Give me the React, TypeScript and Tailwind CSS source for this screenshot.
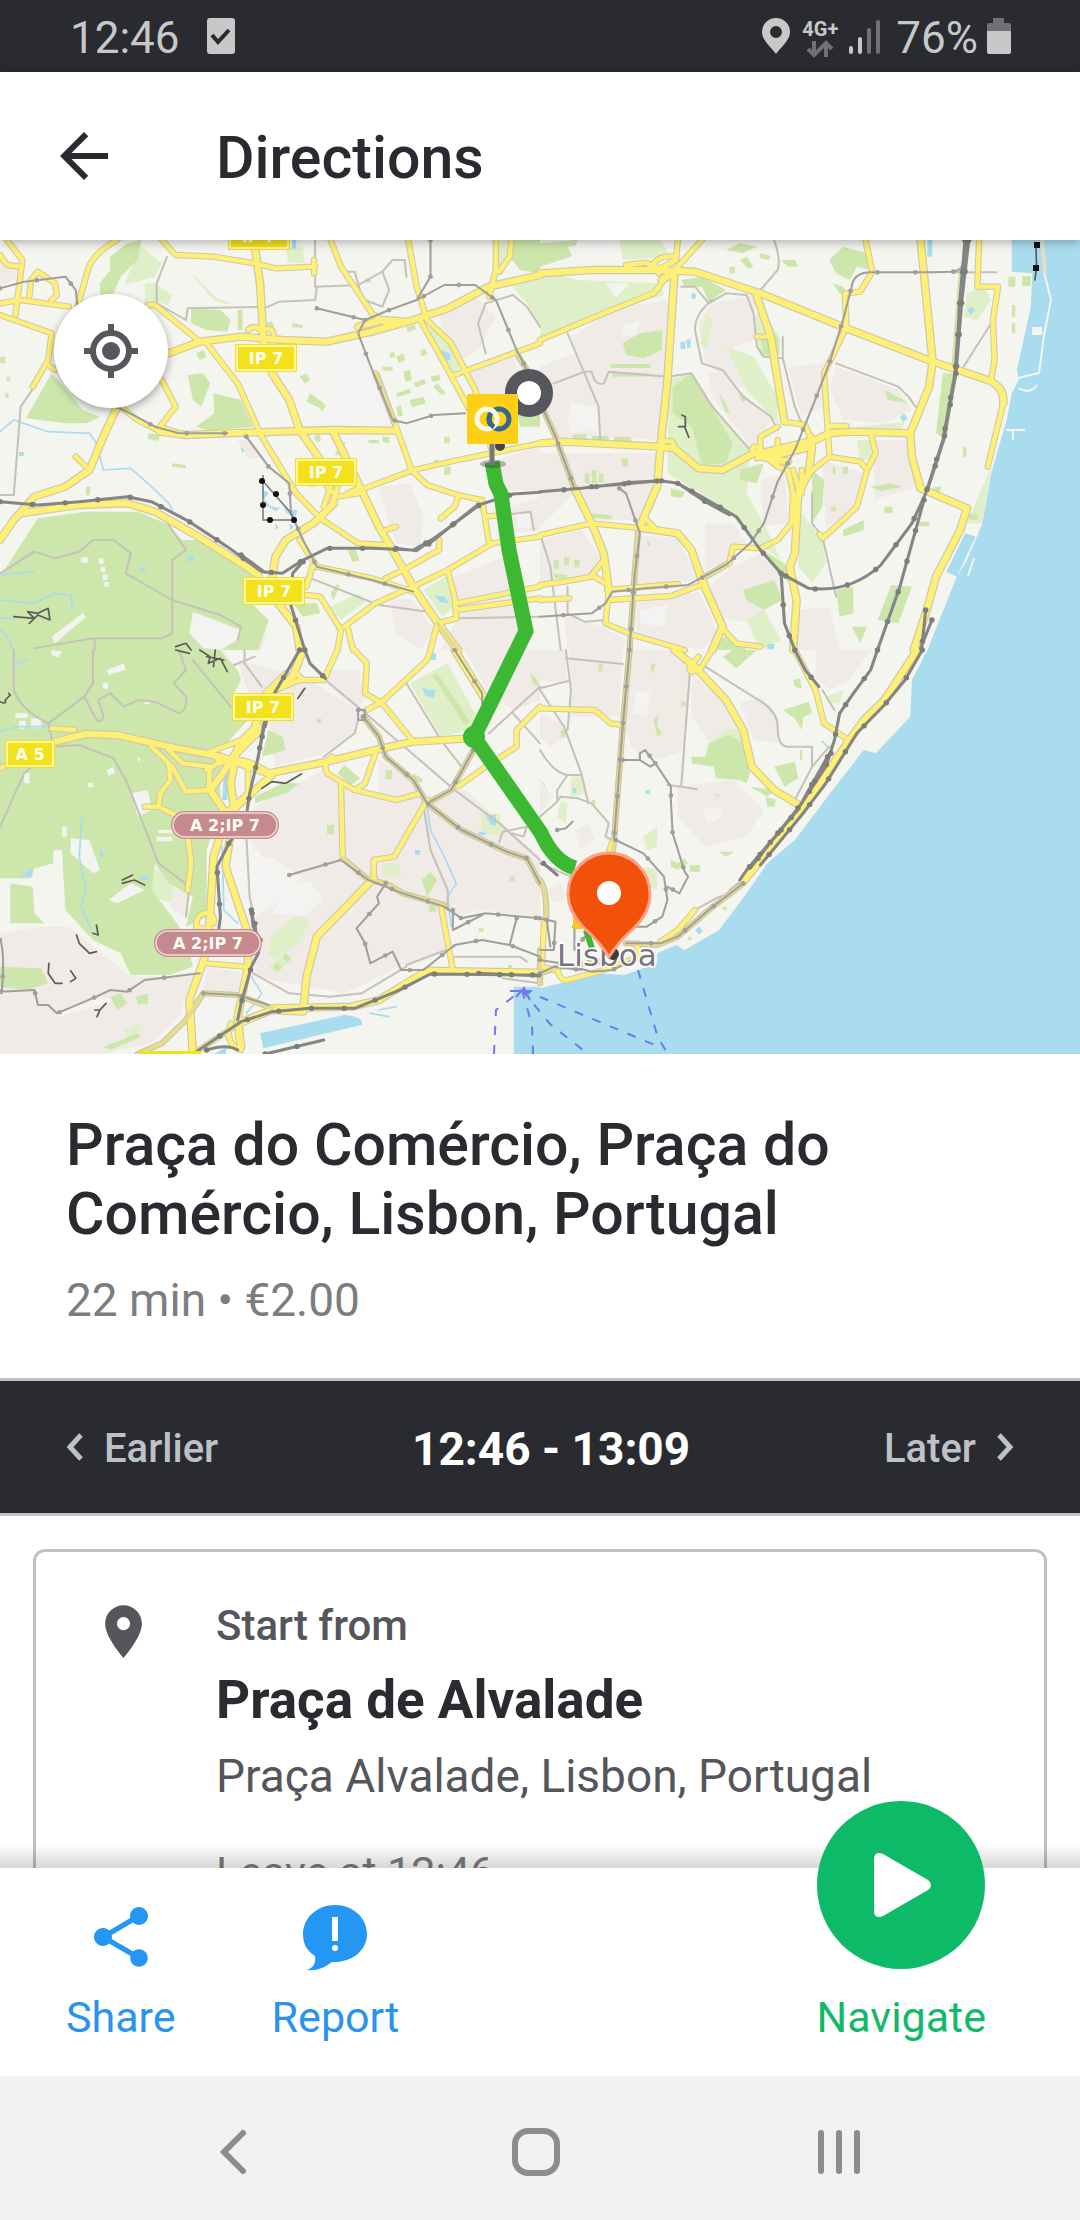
import React from "react";
import { MdArrowBack, MdLocationOn, MdShare } from "react-icons/md";

/* ---------- Map data: four sheets, each drawn in its own 1568 x 1230 grid ---------- */

type Sheet = {
  at: string;
  built: string[];
  pale: string[];
  wood: string[];
  bare: string[];
  water: string[];
  stream: string[];
  path: string[];
  road: string[];
  wide: string[];
  tramRoad: string[];
  tram: string[];
  rail: string[];
  scrub: string[];
};

const northWest: Sheet = {
  at: "translate(0 0) scale(.34439 .33333)",
  built: [
    "M1360 390L1490 350L1520 430L1500 600L1420 620L1400 480Z",
    "M1100 740L1190 730L1230 830L1220 920L1150 910L1130 850Z",
    "M1320 1010L1490 940L1510 1230L1280 1230L1330 1130Z",
    "M590 930L650 940L690 1000L600 1000L570 960Z",
    "M0 60L60 85L40 120L0 140Z",
    "M1270 210L1380 170L1440 230L1390 330L1340 360L1290 280Z",
    "M1440 660L1568 620L1568 750L1470 750Z",
    "M1130 1070L1200 1080L1260 1170L1220 1230L1150 1180Z",
    "M690 600L730 600L760 650L720 660Z",
    "M1480 800L1568 770L1568 870L1480 880Z",
    "M700 1160L780 1140L760 1230L690 1230Z",
  ],
  pale: [
    "M410 20L470 70L450 110L360 135L385 75Z",
    "M450 130L500 165L490 195L455 185Z",
    "M1245 245L1300 290L1335 385L1310 400L1250 290Z",
    "M1230 1050L1300 1005L1320 1100L1285 1130Z",
    "M560 105C600 130 610 180 665 185L665 192C600 192 595 130 560 112Z",
    "M1480 130L1568 115L1568 260L1530 190Z",
    "M830 20L880 20L885 70L835 65Z",
    "M420 130H455V190H420Z",
    "M1450 0H1485L1465 90L1445 80Z",
    "M960 1100L1040 1060L1060 1085L990 1140Z",
  ],
  wood: [
    "M0 1010L110 835L250 815L400 815L480 850L500 870L530 900L600 900L700 985L760 1010L720 1060L740 1100L780 1140L750 1230L0 1230Z",
    "M150 400L210 470L240 510L290 530L250 550L190 550L75 535Z",
    "M370 10L410 0L400 60L350 110L330 160L290 170L290 130L320 90L320 50Z",
    "M555 205L640 210L670 240L660 275L600 270L555 250Z",
    "M620 460L700 480L735 560L610 572L570 560L622 520Z",
    "M545 405L590 400L610 430L585 500L560 480Z",
    "M1490 0H1568V100L1510 90L1480 50Z",
    "M850 1090L920 1090L930 1120L880 1130Z",
    "M1500 500L1568 480V560L1510 560Z",
    "M690 210h14v60h-14z M570 340l20 -10 10 20 -20 10z M870 410l20 -10 10 20 -15 10z M900 460l40 30 20 40 -20 10 -10 -35 -40 -20z",
    "M1110 380h30v12h-30z M1150 350l20 -10 8 20 -20 10z M1170 395l20 -6 6 30 -18 6z M1200 430l30 -12 8 12 -30 12z M1150 460l40 -14 4 12 -40 14z M1190 480l40 -10 6 20 -40 12z M1250 410l25 -6 5 16 -24 6z M1150 500l14 -4 6 30 -14 4z M1180 260l24 -6 4 14 -24 8z M1220 330l16 -4 4 18 -16 4z M1270 430l24 30 -12 6 -24 -26z M1130 340l14 -4 4 14 -14 4z",
    "M770 250l20 -6 6 16 -20 6z M850 250l30 5 -2 10 -30 -4z M990 610l14 -4 -20 40 -12 0z M1110 590l20 0 0 20 -20 -5z M1290 680h18v25h-18z M900 720l12 0 0 20 -12 0z M250 740h12v26h-12z M500 670l40 5 0 10 -40 -4z M430 580l34 5 -4 18 -30 -6z M1010 930l20 -8 14 40 -20 4z M960 1060l20 -30 6 10 -18 40z M700 1060h25v20h-25z M1290 590h16v20h-16z M20 410h10v14h-10z M15 460h10v14h-10z M0 350h16v20h-16z M1260 660h14v12h-14z M910 590l18 -8 4 20 -12 4z M1070 600h30v10h-30z",
  ],
  bare: [
    "M955 330L1040 290L1140 555L900 562L960 480Z",
    "M560 1115L700 1170L690 1200L640 1230L590 1225L550 1180Z",
    "M150 1190L240 1120L250 1130L160 1210Z",
    "M235 952h20v16h-20z M287 955h14v16h-14z M292 980h14v16h-14z M298 1003h14v16h-14z M303 1026h14v14h-14z",
    "M1040 150L1090 130L1125 160L1110 195L1060 190Z",
    "M1500 820L1540 815L1550 860L1505 865Z",
  ],
  water: [
    "M1280 330l25 10 4 20 -20 4z M1062 115h14v12h-14z M848 0h12v28h-12z M55 636h14v12h-14z M545 950h18v14h-18z M408 980h14v14h-14z",
    "M760 750l20 8 -12 20 16 20 30 6 -14 10 -30 -20z M820 790l20 20 24 0 -6 24 -26 -14z M1260 1065l30 5 14 20 -26 -4z M840 850l12 10 -8 12z M700 620l10 12 -8 6z M800 850l10 14 -10 4z",
  ],
  stream: [
    "M0 575L40 540L140 575L260 580L280 610L300 690L380 685L440 740L490 790L500 810",
    "M0 1005L100 995",
    "M0 1080L100 1090L160 1060L205 1065L210 1110",
    "M0 1135H40",
    "M0 1170Q30 1190 35 1230",
  ],
  path: [
    "M485 50L455 130L455 190L540 240L545 205L780 200L810 185L915 180L920 140L1040 135L1110 95L1140 60L1175 60L1180 110",
    "M915 80V140",
    "M100 440L60 500L40 765L0 765",
    "M0 1000L100 935L160 955L230 935L270 900L330 900L380 940L365 1000L500 1080V1180L470 1195H270L100 1225",
    "M500 1080V960L540 930L480 840",
    "M500 1080L640 1125L700 1160L690 1200",
    "M890 1010L1100 1095L1240 1115",
    "M1410 340L1388 250L1410 190L1490 165L1530 200L1568 260",
    "M1110 95L1130 150L1110 200L1060 180L1000 95L1030 95L1045 150",
    "M1330 1135L1568 1130",
    "M1430 830L1540 815L1550 870",
    "M275 1195V1230 M915 0L915 60",
  ],
  road: [
    "M580 305L450 195H430",
    "M0 190L60 180L200 200",
    "M0 225L150 280",
    "M45 225L60 100L65 60L20 0",
    "M0 45L20 75L60 80",
    "M85 170L90 120L110 95L160 130L165 165L150 180",
    "M340 0Q270 40 255 90L225 200",
    "M470 0L510 45L620 50L740 70L800 85L915 80M912 60V100",
    "M960 0L990 80L1080 220L1120 250",
    "M1185 0L1210 140L1240 240L1310 310L1380 450L1430 640",
    "M1220 240L1290 370L1380 540",
    "M1440 0V90L1420 170",
    "M1485 0L1480 50L1450 95",
    "M1320 405L1568 310",
    "M1060 745L1200 690L1330 660L1568 610",
    "M1090 400L1150 560L1195 690L1240 735L1330 765L1400 780",
    "M1330 770L1320 800L1280 835",
    "M470 420L510 500L465 560L520 580",
    "M350 500L400 540L465 575",
    "M150 280L140 360L95 440M140 375L160 390",
    "M220 650L250 680",
    "M600 310L690 430L760 590L860 760L930 835L1040 910L1120 915",
    "M1040 760L980 770L950 740M1040 745L1010 760",
    "M965 790L980 740M940 800L960 740",
    "M870 900L920 980L1080 1015L1200 1055",
    "M910 970L890 1040M890 1065L930 1070L990 1170L980 1230M1010 1165L1025 1230",
    "M1000 1160L1090 1090L1200 1040L1300 990L1430 910L1568 890",
    "M1120 1015L1180 985L1275 930V900",
    "M1400 780L1420 910",
    "M1300 990L1320 1070L1325 1135L1270 1150L1250 1230",
    "M1325 1090L1568 1040M1325 1110L1568 1075",
    "M1120 870L1150 860",
    "M1410 830L1460 825",
    "M720 270Q740 250 760 275Q790 255 795 285",
  ],
  wide: [
    "M740 20L755 130L765 300L790 400L840 480L870 570L930 660",
    "M490 340L580 305L700 290L820 300L950 305L1080 275L1200 240L1300 205L1420 140L1568 105",
    "M1040 260L1110 240L1180 245",
    "M465 575L540 585L660 580L960 570L1150 572",
    "M340 500L300 590L260 690L190 740L100 770L40 840L0 900",
    "M60 820L230 795L370 790L450 815L560 880L700 970L750 1005",
    "M965 570L1040 730L1100 860L1140 930L1200 1040L1275 1155L1330 1230",
    "M970 790L910 850L830 900L800 950L790 1010L800 1080L860 1160L870 1230",
  ],
  tramRoad: ["M1095 405L1145 550", "M1500 340L1530 390", "M1270 1150L1330 1230"],
  tram: [
    "M920 205L1060 240L1130 210L1210 180L1290 135L1380 135L1440 180L1500 330L1530 390",
    "M1250 0V110L1210 180",
    "M1060 240L1040 280L1075 375L1140 540L1180 550L1260 525L1350 520",
    "M715 590L780 680L840 730L845 820L880 900L920 980L1080 1020L1200 1055",
    "M0 145L70 125L190 110L220 150L225 200",
    "M340 500L450 560L520 580H660",
  ],
  rail: [
    "M0 785L110 795L230 785L370 770L440 785L550 845L660 920L700 950L760 995L820 1000L880 960L950 925H1080L1200 930L1270 890L1390 795L1490 762L1568 757",
    "M700 945L770 997M1150 925L1210 932L1300 865L1390 797M1245 912L1380 800",
    "M880 965L850 1000L840 1080L870 1180L885 1230",
  ],
  scrub: [
    "M40 1130L100 1135L80 1115L110 1120L140 1105L145 1140L110 1125L85 1150",
    "M510 1220L540 1210L555 1230",
  ],
};

const northEast: Sheet = {
  at: "translate(540 0) scale(.34439 .33333)",
  built: [
    "M90 290L230 200L375 180L360 600L180 590L170 500Z",
    "M0 380L100 340L160 480L165 590L50 590L0 480Z",
    "M0 640L340 640V720L290 840L160 840L100 760L0 860Z",
    "M290 885L400 895L460 1020L280 1040Z",
    "M280 1090L460 1055L520 1180L470 1230L280 1185Z",
    "M70 1120L180 1160L250 1200L240 1230H80Z",
    "M500 190L620 165L630 300L560 320L600 450L560 430L480 370L460 250Z",
    "M720 380L830 370L820 500L760 530Z",
    "M820 660L940 700L900 820L830 860Z",
    "M640 940L710 1020L620 1150L510 1130L490 1040L560 980Z",
    "M480 850L560 850L600 910L550 930L540 970L480 990Z",
    "M0 900L120 870L180 960L150 1000L0 1030Z",
    "M490 400L530 400L670 540L620 630L500 470Z",
    "M640 720L710 700L720 850L650 860Z",
    "M860 380L1040 450L1080 510L1000 550L880 540L840 440Z",
    "M970 600L1070 600L1090 740L970 780Z",
    "M750 1110L840 1100L870 1230H750Z",
  ],
  pale: [
    "M0 90L110 120L350 130L360 165L120 240L0 290Z",
    "M375 420L430 400L470 450L610 640L600 760L650 850L700 960L610 890L550 820L470 760L370 700Z",
    "M540 320L620 350L690 470L690 550L600 450Z",
    "M640 200L700 300L695 345L640 350L620 240Z",
    "M1240 160L1290 140L1310 180L1270 240L1230 230Z",
    "M1310 680L1285 850L1240 850Z",
    "M760 820L820 900L830 970L790 1030L750 980Z",
    "M920 560L1060 545L1050 570H930Z",
    "M230 0L350 0L380 50L240 60Z",
    "M480 220L500 240L485 330L465 310Z",
    "M920 600L960 600L970 660L930 660Z",
    "M600 1140L650 1110L700 1200L640 1230Z",
  ],
  wood: [
    "M0 10L110 0L90 50L0 80Z",
    "M385 440L440 400L520 540L560 610L540 670L470 675L440 560L385 520Z",
    "M240 310L290 280L355 270L355 330L300 355L250 345Z",
    "M410 120L470 110L540 150L490 185L470 140L420 140Z",
    "M590 1050L680 1020L705 1080L650 1110L600 1080Z",
    "M860 1050L910 1040L910 1120L870 1130Z",
    "M1020 1035L1080 1040L1040 1150L980 1140Z",
    "M1170 400L1210 400L1180 600L1150 580Z",
    "M1215 100L1230 100L1210 380L1195 370Z",
    "M790 690L825 720L820 800L790 850Z",
    "M880 870L940 840V870L880 890Z",
    "M640 290L690 290L695 345H650Z",
    "M580 690L650 670L630 730L580 720Z",
    "M840 60L880 20L950 40L960 90L920 80L900 120L860 100Z",
    "M645 930L710 970L740 1040L690 1000Z",
    "M510 1210L550 1180L600 1230H500Z",
    "M905 1160L950 1160L930 1210Z",
    "M205 372h115v12h-115z M210 398h105v12h-105z M95 583h40v14h-40z M150 588h50v12h-50z M215 590h50v14h-50z",
    "M130 700h14v30h-14z M150 690h14v40h-14z M170 700h14v28h-14z M235 655l20 0 0 24 -16 0z M380 745l40 10 -6 20 -34 -6z M150 820l60 6 -4 12 -50 -4z M40 960h14v26h-14z M70 950h14v24h-14z M100 960h14v22h-14z M40 1000l40 6 -4 10 -34 -2z M310 900l14 16 -10 4z M575 460l24 20 -10 10z M520 460l20 30 10 30 -12 -4z",
    "M1370 195h10v35h-10z M1370 250h10v30h-10z M1360 110h20v30h-20z M1400 108h25v30h-25z M1228 620h10v30h-10z M1000 450l40 20 30 20 -60 -10z M1100 845l30 0 0 14 -30 0z M1140 740l26 0 -6 16 -18 0z M960 740l60 -10 30 10 -60 14z M1000 800h24v20h-24z M850 680h8v24h-8z M880 680h14v22h-14z M845 800h14v14h-14z",
    "M540 30l40 -20 50 10 -40 20z M580 60l20 -10 20 30 -14 6z M700 60l40 0 10 20 -30 0z M550 80l16 0 0 20 -16 0z M640 40l30 8 -6 12 -26 -6z M850 130l30 10 20 30 -30 -10z M1245 820l30 6 -4 14 -30 -4z",
  ],
  bare: [
    "M90 490L160 500L165 570L90 580L80 530Z",
    "M240 260L290 240L280 280L240 290Z",
    "M380 790L430 760L470 800L440 850L390 830Z",
    "M290 1110L370 1095L360 1160L290 1150Z",
    "M190 130L260 130L220 175Z",
    "M80 20L200 0L190 40L110 80Z",
  ],
  water: [
    "M1370 0V95L1430 100L1425 200L1385 390L1390 420L1370 460L1355 540L1310 700L1285 850L1240 960L1210 1010L1125 1230H1568V0Z",
    "M1235 880L1265 890L1210 1010L1180 995Z",
    "M1125 0h14v50h-14z M1240 210l14 -10 10 12 -14 12z M1045 530l14 -8 8 14 -14 10z M408 305l14 0 0 22 -14 0z M425 300l12 -4 0 28 -10 0z M440 160h12v16h-12z M660 1212h20v16h-20z",
  ],
  stream: [],
  path: [
    "M680 0Q700 60 690 90L640 150",
    "M80 280L170 500L175 600",
    "M40 430L130 395L150 395Q160 440 185 430L200 395L370 410L440 400L500 500L610 630",
    "M500 180Q450 220 450 270L470 370L530 390L590 470L670 530L690 570",
    "M410 140L450 140L490 190L540 160L600 165L620 220L630 320L650 350L705 355V290",
    "M705 355L740 500L760 550",
    "M860 370L1040 440L1070 470L1090 500L1110 500",
    "M790 760V850L820 890L860 1070",
    "M1230 380L1310 250",
    "M0 880L30 980L60 1230",
    "M1325 97H1200",
    "M80 1040V1120L130 1145L190 1140",
  ],
  road: [
    "M0 300L220 205L330 160L360 120L400 95",
    "M400 0L395 60L340 90M470 0L400 80L350 120",
    "M250 75L310 68L340 90M345 100L330 70Q350 45 390 50",
    "M0 885L150 850L300 865",
    "M300 830L330 860",
    "M690 560L640 590L640 640L690 680L720 690L735 760L730 850L690 900L640 925L560 920L550 970L480 1010",
    "M780 700L840 650L930 665L950 690L920 800L880 840L820 895L812 882",
    "M945 0L965 95L930 155L885 160L890 260L825 400L835 560L840 640",
    "M840 558H890",
    "M1275 0L1270 140H1330L1315 240L1320 360L1310 420",
    "M960 580L975 640L950 690",
    "M530 1165L570 1210L640 1220",
    "M0 1035L70 1025L150 1010M185 960L150 1005L190 1030",
    "M195 1050L400 1032M200 1080L380 1068L480 1030",
    "M0 1080L85 1075",
    "M350 605Q400 595 385 625",
    "M630 290H670",
    "M690 600V670M710 545L770 555L785 590",
    "M1300 680L1345 490",
    "M200 1050L190 1150L270 1185L420 1230",
    "M735 690L755 760L740 800M760 690V760",
    "M615 630Q620 610 640 630Q650 655 630 655",
  ],
  wide: [
    "M0 100L150 90L340 90L450 95L640 160L890 265L1140 365L1300 420Q1350 440 1345 490",
    "M390 110L370 420L350 620L340 740L290 860",
    "M0 610L70 605L350 620L390 625L460 685L530 690L620 640L660 635L800 600L840 580L900 575L1075 580",
    "M665 650L790 620M640 650L720 665",
    "M630 170L670 290L690 420L710 545",
    "M785 590L790 620L780 700L750 760L740 940L725 980L745 1080L735 1230",
    "M1105 0L1140 365L1130 440L1075 580L1080 650L1105 745",
    "M1105 745L1240 805L1220 870L1150 1010L1120 1120L1085 1230",
    "M300 865L400 880L440 930L470 1020L530 1160L500 1230",
    "M100 745L150 850L185 940L200 1050",
  ],
  tramRoad: ["M10 510L45 590L100 745", "M285 870L275 1000L260 1230", "M545 970L480 1010"],
  tram: [
    "M1200 95L1140 97H960Q910 98 905 140L880 240L840 370L795 490L740 630L690 725L650 850L610 910L540 975L430 1035L305 1045L210 1055L190 1090L150 1120L0 1130",
    "M230 745L250 760L270 820L290 880L275 1000L260 1230",
    "M10 510L45 590L100 745",
    "M1200 95Q1225 90 1228 70",
  ],
  rail: [
    "M1240 0L1220 180L1205 400L1170 600L1120 760L1080 850L990 975Q900 1060 780 1045L700 1000L640 930L570 830L470 770L400 730L350 722L270 727L120 745L0 755",
    "M1245 0L1225 180L1208 400M1234 0L1216 220M1208 400L1172 600L1125 750",
    "M1115 780L1080 910L1045 1040L980 1230",
    "M700 1000L710 1150L740 1230",
    "M400 730L480 785L550 825M150 740L350 722",
    "M1120 1110L1108 1230M1138 1140L1105 1225",
  ],
  scrub: ["M412 525L422 530L422 560L402 560M420 560L432 592", "M1440 20L1442 80L1437 120"],
};

const southWest: Sheet = {
  at: "translate(0 410) scale(.34439 .33333)",
  built: [
    "M690 30L880 80L1040 180L1030 250L940 310L800 350L780 200L720 130Z",
    "M740 470L940 360L990 400L1060 420L1220 440L1350 420L1568 620V800L1400 780L1300 800L1310 880L1250 930L1180 940L1000 1030L740 980V800L880 680L760 620L720 560Z",
    "M0 850L120 830L200 830L380 980L560 980L520 1100L300 1040L160 1090L0 1020Z",
    "M600 950L700 965L690 1030L590 1020Z",
    "M0 1035L100 1030L170 1100L370 1040L530 1090L440 1180L300 1212H0Z",
    "M960 60L1040 60L1060 150L1030 180L940 90Z",
    "M1350 0L1568 0V150L1490 180L1420 130Z",
    "M450 640L540 720L550 800L500 780Z",
    "M1100 330L1200 390L1220 440L1100 430Z",
  ],
  pale: [
    "M1190 100L1300 40L1400 230L1280 260Z",
    "M785 860L860 795L900 810L870 880L800 930L780 910Z",
    "M780 950L830 910L850 930L800 970Z",
    "M340 440L375 450L380 500L340 500Z",
    "M230 725L270 720L285 790L260 800Z",
    "M1110 640L1160 640L1165 680L1110 680Z",
    "M1395 490L1450 490L1460 560L1400 550Z",
    "M440 650L500 700L500 760L440 740Z",
    "M360 1140L400 1120L420 1140L370 1165Z",
  ],
  wood: [
    "M0 0H640L690 60L700 90L680 130L720 210L640 300L640 480L600 600V800L540 830L560 740L490 700L450 640L440 720L500 800L540 860L560 950L490 975H380L350 910L270 870L190 780L180 600H155V640L100 655L90 685H0Z",
    "M30 700L95 710L100 790L130 820H30Z",
    "M0 950L120 955L140 1000L80 1020L0 1010Z",
    "M980 370L1000 345L1045 385L1020 405Z",
    "M780 240L820 260L830 300L760 320Z",
    "M740 440L820 400L870 400L830 430L740 460Z",
    "M1225 690L1250 665L1270 690L1240 740Z",
    "M320 1040L350 1030L370 1060L340 1080Z",
    "M300 1190L400 1150L410 1160L320 1200Z",
    "M395 1040L430 1030L430 1060L400 1065Z",
    "M1255 75L1270 70L1365 215L1350 225Z",
    "M950 525h20v28h-20z M1120 360h18v28h-18z M1200 370l24 14 4 16 -24 -8z M920 205h12v14h-12z M1475 930h12v24h-12z M1245 765h20v20h-20z M1480 680h14v14h-14z M1390 835h14v10h-14z M1540 70l20 20 6 20 -20 -10z",
    "M800 940l20 10 -10 14 -18 -8z M830 910l14 14 -10 12 -14 -14z",
  ],
  bare: [
    "M205 565L260 570L290 660L270 670L205 610Z",
    "M735 650L790 620L830 650V740L760 790L735 720Z",
    "M840 700L900 695L940 750L880 800L790 790Z",
    "M310 60L360 40L365 60L315 75Z",
    "M45 190h35v14h-35z M90 205h30v30h-30z M55 212h20v24h-20z M420 150h14v12h-14z M310 360l20 -10 4 18 -20 10z M255 398h16v14h-16z M70 370h16v30h-16z M180 530h14v30h-14z M150 0l30 5 -10 18 -20 -8z M298 98h16v18h-16z M395 320l14 6 -6 10z",
    "M460 540h40v10h-40z M455 560h45v14h-45z M315 750L380 700L420 720L340 760Z",
    "M380 430L430 420L440 480L400 500Z",
    "M680 300L700 300L690 470L670 470Z",
    "M600 1040L680 1040L660 1110L580 1180L570 1090Z",
    "M640 670L660 670L700 820L640 790Z",
    "M680 700L725 700L730 800Z",
    "M1340 920L1540 925L1530 945H1340Z",
  ],
  water: [
    "M755 1150L1000 1095Q1060 1100 1050 1125L765 1195Z",
    "M1492 1010H1568V1230H1492Z",
    "M590 1230L660 1190L650 1230Z",
    "M60 680L90 655L95 680Z",
    "M400 690L430 672L430 690Z",
    "M650 370L665 370L660 450L645 450Z",
    "M1225 110l20 10 20 0 -6 24 -24 -8z M1250 10h16v20h-16z M1205 600h14v14h-14z M290 600h10v20h-10z M1410 495l30 0 0 30 -16 0z M1390 545h20v10h-20z",
  ],
  stream: [
    "M1240 470L1250 540L1290 620L1325 700L1300 740L1310 830",
    "M238 500L230 620L250 720L235 770L270 850",
    "M645 590L650 780L690 820",
    "M730 980L760 1030L740 1060L715 1090",
    "M38 0L42 45L80 30",
    "M0 245L50 230L160 230",
    "M1075 1090L1130 1100M1100 1080L1150 1070",
  ],
  path: [
    "M945 90L1050 180L1140 260L1230 340L1320 420L1450 520L1568 630",
    "M40 0V120Q60 180 140 220L245 140L270 100V0",
    "M245 140L280 210Q300 220 300 195L285 150L320 130L360 170L400 150L450 155L520 190Q545 180 540 140L505 100L540 60L520 0",
    "M140 220L155 290L230 285L330 325L370 400L460 640L550 710L540 800",
    "M0 530L70 370L155 290",
    "M560 30L670 170",
    "M1180 100L1280 270L1340 350",
    "M1230 470L1250 600L1300 720V780",
    "M735 970L840 1030L960 1040L1050 1030L1180 950",
    "M1040 210L1030 250L940 320",
    "M710 0V40L760 110M680 45L740 20",
    "M712 500L725 740L735 790",
    "M1180 945L1320 890M1320 920H1510L1530 935",
    "M1450 575L1460 545L1530 530L1520 560L1490 550",
    "M1568 110L1420 250M1490 190L1568 280",
    "M1460 985L1568 1000",
  ],
  road: [
    "M0 355L160 275L250 255",
    "M440 290L490 340L495 390L465 430L460 470H420",
    "M460 470L540 510L555 640L545 720",
    "M490 300L530 340L610 350L605 420L540 425L500 350",
    "M740 230L700 270L600 310L500 295",
    "M760 240L680 320L640 340L620 310",
    "M720 340V430L665 480",
    "M600 840L570 830Q570 785 605 790Q625 795 620 820",
    "M600 940L710 950",
    "M770 130L830 70M800 120L870 90L940 90L980 0M860 70L880 90",
    "M1030 0L1065 40L1060 130L1110 160L1200 275",
    "M1110 155L1240 30L1250 0M1110 155L1065 180",
    "M965 320Q935 340 950 370L1030 420L1060 400L1090 310",
    "M1030 420L1150 450L1220 430",
    "M990 400L995 625",
    "M1240 450L1145 620L1085 630V685",
    "M1330 410L1410 350L1500 290V240L1568 170",
    "M1280 765L1315 960",
    "M560 1212L680 1130L790 1080",
    "M670 1120Q650 1180 700 1200L690 1150",
    "M600 360L650 330L690 330Q730 330 790 375",
    "M150 235L215 240",
  ],
  wide: [
    "M160 275L250 252L340 255L490 290L640 320L780 370L950 335L1110 295L1200 275L1370 265",
    "M880 0L850 80L770 140L740 230",
    "M750 230L690 300L640 380L610 420L650 480",
    "M690 290L670 400L680 480L655 650L720 850L720 950L690 1100L700 1190",
    "M790 375L740 420L665 490",
    "M660 490L620 620L610 800L595 920L550 1050L560 1212",
    "M1085 685L920 860L890 980L880 1085L790 1080L690 1120",
    "M790 1075L1020 1070L1100 1050L1240 962L1568 968",
    "M1320 0L1410 150",
  ],
  tramRoad: [
    "M1375 300L1310 420L1240 460L1340 540L1470 605L1530 625L1568 700",
    "M1055 200L1100 260L1120 320L1200 390L1240 460",
    "M995 625L1070 690L1120 700L1170 730L1290 765",
    "M400 1212L470 1180L540 1110L590 1030L690 1035L790 1075",
    "M1568 900V1000",
  ],
  tram: [
    "M0 1025L100 1020L110 1065L140 1065L165 1090L280 1040L320 1020L370 1025L420 990L580 970",
    "M0 870Q15 900 5 1030",
    "M840 675L990 630L1070 690L1170 730L1290 770L1340 805L1410 790L1568 805",
    "M1120 700L1095 740L1100 760L1035 835L1060 880L1075 940L1140 905L1165 960H1230L1320 885L1400 870L1480 885L1568 920",
    "M1500 805L1480 885M1315 780V840L1400 795",
    "M1040 180H1060V210H1040ZM1055 200L1100 260L1120 320L1200 390L1240 460L1340 540L1470 605L1530 625L1568 700",
    "M1375 300L1310 420L1240 460",
    "M590 1030L690 1035L780 1065M1320 0L1400 130V160",
  ],
  rail: [
    "M870 0L780 160L750 320L725 430L715 500",
    "M715 500L665 580L630 650L640 800L635 840",
    "M885 0L900 40L945 85",
    "M770 200L748 330M785 170L770 230",
    "M730 780L735 830L755 870L750 910L730 950L700 1060L690 1110",
    "M740 820L748 900M732 790L742 860",
    "M560 1212L700 1115L790 1085L900 1075L1030 1075L1150 1025L1250 972L1568 975",
    "M1390 970L1568 978",
    "M770 1212L940 1170",
    "M600 1200Q660 1180 690 1200",
  ],
  scrub: [
    "M580 0L610 20L605 40L640 25L660 65M600 20L650 30M625 0L620 50M510 0L550 10",
    "M0 155Q20 165 15 150L30 135L25 130M865 145L885 115",
    "M760 415L790 395L830 400L875 372",
    "M355 690L385 675M355 700L390 690L420 705",
    "M270 850L285 855L280 825M222 855L230 880L260 910L280 905M142 940L140 970L160 1000L180 1000M205 962L220 985L205 995",
    "M275 1080L290 1080L282 1100M290 1080L308 1060",
  ],
};

const southEast: Sheet = {
  at: "translate(540 410) scale(.34439 .33333)",
  built: [
    "M85 0H240L230 200L85 200L90 100Z",
    "M265 0H420L440 60L420 300L340 330L270 300L245 240Z",
    "M440 70L540 160L580 240L500 290L440 200Z",
    "M580 160L640 140L690 210V280L620 270Z",
    "M800 0H960L900 90L840 120L800 80Z",
    "M400 410L560 390L650 480L600 560L480 590L400 500Z",
    "M0 0H70L80 100L0 90Z",
    "M0 190L60 220L80 260L30 290L0 260Z",
    "M100 540L140 520L160 570L120 600Z",
    "M0 400L40 440L0 490Z",
    "M20 720L60 700L80 740L40 760Z",
  ],
  pale: [
    "M90 380L120 380L130 430L90 440Z",
    "M60 450L80 460L75 520L50 500Z",
    "M500 270L545 235L575 240L590 280L500 290Z",
    "M300 560L340 530L340 590L310 600Z",
    "M830 140L880 120L870 160L840 160Z",
    "M300 650L340 660L340 720L300 700Z",
  ],
  wood: [
    "M440 320L480 320L490 280L550 255L590 280L610 370L600 400L580 390L510 385L505 350L440 340Z",
    "M705 180L780 155L790 190L765 200L760 240L740 205Z",
    "M560 0H630L570 55L530 20Z",
    "M680 350L740 335L750 385L710 410Z",
    "M610 410L680 420L660 440Z",
    "M655 440L685 450L680 470L660 470Z",
    "M735 90L755 85L760 115L740 110Z",
    "M330 210L345 190L340 230L355 250L340 260Z",
    "M380 630L400 640L420 625L430 640L400 660L380 650Z",
    "M520 605L565 605L540 620Z",
    "M170 40h12v24h-12z M320 45l16 -6 -10 34z M410 155h14v14h-14z M60 240h14v20h-14z M435 645h30v20h-30z M505 430l18 6 -6 8z M755 300h6v30h-6z M0 390l14 12 0 10z M150 450h10v14h-10z M530 770h12v10h-12z M430 860h10v10h-10z",
  ],
  bare: ["M280 120L320 130L310 200L270 190Z", "M470 480L520 470L530 500L490 520Z"],
  water: [
    "M1125 0L1080 90L1075 200L975 310L940 300L850 420L740 570L660 640L600 730L520 840L420 900L395 885L340 910V940L245 975L160 970L60 1000L0 1015V1230H1568V0Z",
    "M450 840l12 -10 12 12 -12 12z M307 420h12v12h-12z M95 415h10v14h-10z",
  ],
  stream: ["M820 275L835 290"],
  path: [
    "M75 0L90 120L80 240",
    "M0 120L70 230L120 370L140 460",
    "M75 25L240 42M0 115L85 92",
    "M435 70L410 410L455 418M410 410L370 405",
    "M480 50L650 160Q690 190 690 230Q690 290 720 290H790V350L740 450",
    "M790 350L840 290",
    "M0 500L45 460L60 440L110 445L150 460L200 520L190 560L210 570",
    "M0 300Q40 370 80 375L120 375M80 375L50 420V450",
    "M550 720L600 680M450 780L520 740L550 735",
    "M820 120L855 180",
    "M0 640L90 680",
  ],
  road: [
    "M0 175L160 180L205 220L240 225",
    "M500 0L470 50Q430 80 435 50L460 20",
    "M740 0L800 120L825 220L895 270",
    "M450 780L400 840L350 875",
    "M50 960Q60 995 80 990L170 965L290 920L280 880",
    "M12 820L5 950L40 960",
    "M210 575L190 640",
  ],
  wide: [
    "M390 0L450 50L540 150L590 240L615 350L680 420L760 470",
    "M1095 0L1000 150L940 210L895 275L760 480L590 695",
  ],
  tramRoad: [
    "M260 0L240 230L215 570L210 620",
    "M590 700L490 780L400 860L340 885L250 880",
    "M0 690Q20 720 18 800",
    "M0 970L60 950L170 935",
  ],
  tram: [
    "M260 0L240 230L215 570M220 570L300 610L360 680L370 750L355 800L310 830L280 830",
    "M240 330H290V310L305 300L335 340L320 350L290 330M335 340L380 410V450L385 550L420 665L430 680L405 730L370 710",
    "M50 540L75 535L95 515",
    "M0 805L45 815L40 900H0M20 810L30 890M100 830V900L130 860",
    "M590 700L490 780L400 860L350 880L250 880",
    "M0 930L60 940L150 965L210 960L270 930M0 970L40 950L120 960",
  ],
  rail: [
    "M740 0L770 60L810 110",
    "M980 0L960 60L910 130L870 190L855 270L830 350L740 490L600 660L580 690",
    "M845 310L760 460L690 550L610 655M835 320L745 485M700 540L600 660",
    "M1110 0L1060 90L1000 165L920 250L830 400L760 495L640 645",
    "M10 640L50 675",
  ],
  scrub: [],
};

const sheets: Sheet[] = [northWest, northEast, southWest, southEast];

type Layer = {
  key: keyof Sheet;
  fill?: string;
  stroke?: string;
  width?: number;
  dash?: string;
};

const layers: Layer[] = [
  { key: "built", fill: "#f0ebe7" },
  { key: "pale", fill: "#dfefc8" },
  { key: "wood", fill: "#cde6ab" },
  { key: "bare", fill: "#f3f3f1" },
  { key: "water", fill: "#a9dcee" },
  { key: "stream", stroke: "#a9dcee", width: 5 },
  { key: "path", stroke: "#c6c1bb", width: 6 },
  { key: "road", stroke: "#cfc8ac", width: 19 },
  { key: "wide", stroke: "#cfc8ac", width: 25 },
  { key: "tramRoad", stroke: "#c9c3a6", width: 18 },
  { key: "road", stroke: "#fdf075", width: 13 },
  { key: "wide", stroke: "#fdf075", width: 18 },
  { key: "tramRoad", stroke: "#e6dc90", width: 12 },
  { key: "tram", stroke: "#a09f9c", width: 6 },
  { key: "tram", stroke: "#a09f9c", width: 14, dash: "0 110" },
  { key: "rail", stroke: "#858583", width: 9 },
  { key: "rail", stroke: "#7d7d7b", width: 16, dash: "0 95" },
  { key: "scrub", stroke: "#5c5c58", width: 5 },
];

function RoadSign({ x, y, w, label }: { x: number; y: number; w: number; label: string }) {
  const motorway = label.startsWith("A 2");
  const fill = motorway ? "#c58a8e" : "#f3e11b";
  const rim = motorway ? "#f3d9da" : "#fffbd0";
  const r = motorway ? 14 : 1;
  return (
    <g>
      <rect x={x} y={y} width={w} height={28} rx={r} fill={fill} />
      <rect x={x + 2} y={y + 2} width={w - 4} height={24} rx={motorway ? 12 : 0} fill="none" stroke={rim} strokeWidth={1.5} />
      <text
        x={x + w / 2}
        y={y + 20}
        textAnchor="middle"
        fill="#fffff4"
        fontFamily='"DejaVu Sans", sans-serif'
        fontWeight={700}
        fontSize={16}
      >
        {label}
      </text>
    </g>
  );
}

function CityMap() {
  return (
    <svg
      className="block h-full w-full"
      viewBox="0 0 1080 814"
      preserveAspectRatio="xMidYMid slice"
      role="img"
      aria-label="Map of Lisbon with the route"
    >
      <rect width="1080" height="814" fill="#f4f5ef" />
      {layers.map((layer, i) => (
        <g
          key={i}
          fill={layer.fill ?? "none"}
          stroke={layer.stroke ?? "none"}
          strokeWidth={layer.width}
          strokeDasharray={layer.dash}
          strokeLinecap="round"
          strokeLinejoin="round"
        >
          {sheets.map((sheet) => (
            <path key={sheet.at} transform={sheet.at} d={(sheet[layer.key] as string[]).join(" ")} />
          ))}
        </g>
      ))}

      {/* Breakwater and pier on the north-east shore */}
      <g fill="none" stroke="#f4f5ef" strokeWidth="2">
        <path d="M1044 32L1051 60L1044 95L1039 133L1018 138M1018 148Q1030 155 1037 145M1006 190H1025M1013 190V200" />
        <path d="M1033 88h8v6h-8z" fill="#f4f5ef" />
        <path d="M1042 0L1045 34" stroke="#e8dcc8" strokeWidth="4" />
        <path d="M974 318L968 336" />
      </g>

      {/* Aerial lines */}
      <g stroke="#777" strokeWidth="1.5" fill="none">
        <path d="M263 235V280H294L290 272L262 240" />
        <g fill="#111" stroke="none">
          <circle cx="262" cy="241" r="3" />
          <circle cx="276" cy="254" r="3" />
          <circle cx="263" cy="265" r="3" />
          <circle cx="270" cy="280" r="3" />
          <circle cx="294" cy="280" r="3" />
          <rect x="1034" y="2" width="6" height="6" />
          <rect x="1033" y="25" width="6" height="6" />
        </g>
      </g>

      {/* Ferry lines */}
      <g fill="none" stroke="#7478f0" strokeWidth="2" strokeDasharray="9 10">
        <path d="M494 814L496 770L522 750" />
        <path d="M522 750L532 785L533 814" />
        <path d="M522 750L550 784L588 814" />
        <path d="M522 750L545 759L662 808" />
        <path d="M638 730L658 798L668 814" />
        <path d="M510 751H532M516 757L524 748L530 760" strokeDasharray="none" />
      </g>

      <RoadSign x={228} y={-18} w={62} label="IP 7" />
      <RoadSign x={235} y={104} w={62} label="IP 7" />
      <RoadSign x={295} y={218} w={62} label="IP 7" />
      <RoadSign x={243} y={337} w={62} label="IP 7" />
      <RoadSign x={232} y={453} w={62} label="IP 7" />
      <RoadSign x={5} y={500} w={50} label="A 5" />
      <RoadSign x={171} y={571} w={108} label="A 2;IP 7" />
      <RoadSign x={154} y={689} w={108} label="A 2;IP 7" />
      <rect x={139} y={811} width={62} height={6} fill="#f3e11b" />

      {/* Start marker, metro leg and station */}
      <circle cx="529" cy="153" r="18" fill="#fff" stroke="#55575c" strokeWidth="12" />
      <path
        d="M492 222L496 244L501 254L509 310L526 391L474 497L541 593Q554 622 575 628"
        fill="none"
        stroke="#3cb832"
        strokeWidth="15"
        strokeLinejoin="round"
      />
      <circle cx="474" cy="497" r="11" fill="#3cb832" />
      <rect x="573" y="676" width="9" height="13" fill="#fdc915" />
      <path d="M586 690L592 708" stroke="#3cb832" strokeWidth="6" />
      <ellipse cx="493" cy="224" rx="13" ry="4" fill="#333" opacity=".35" />
      <circle cx="500" cy="206" r="5" fill="#444" />
      <path d="M492 203V225" stroke="#777" strokeWidth="5" />
      <rect x="467" y="154" width="51" height="50" rx="2" fill="#fdd017" />
      <g fill="none" strokeWidth="5">
        <circle cx="499" cy="179" r="10" stroke="#33688f" />
        <circle cx="487" cy="179" r="10" stroke="#fffbe8" />
        <path d="M490 175Q487 183 494 187" stroke="#33688f" />
      </g>

      <text
        x="557"
        y="726"
        fill="#777482"
        stroke="#fff"
        strokeWidth="3"
        paintOrder="stroke"
        fontFamily='"DejaVu Sans", sans-serif'
        fontSize="31"
      >
        Lisboa
      </text>
      <circle cx="613" cy="714" r="6" fill="#3a3b3f" />
      <path
        d="M609 717Q600 702 583 687C573 676 568 666 568 654A41 41 0 0 1 650 654C650 667 645 677 635 687Q618 702 609 717Z"
        fill="#f2510c"
        stroke="#fba282"
        strokeWidth="3"
      />
      <circle cx="609" cy="653" r="12" fill="#fff" />
    </svg>
  );
}

function StatusBar() {
  return (
    <div className="flex h-[72px] shrink-0 items-center justify-between bg-[#2a2b30] pr-[68px] pl-[70px] text-[#c8c8c8]">
      <div className="flex items-center gap-[26px]">
        <span className="pt-1 text-[44px] leading-[52px]">12:46</span>
        <svg width="30" height="36" viewBox="0 0 30 36" aria-hidden="true">
          <rect x="1" width="28" height="36" rx="3" fill="currentColor" />
          <path d="M6 17L12 24L23 12" fill="none" stroke="#2a2b30" strokeWidth="4" />
        </svg>
      </div>
      <div className="flex items-center">
        <svg className="mr-3" width="28" height="36" viewBox="0 0 28 36" aria-hidden="true">
          <path
            fill="currentColor"
            fillRule="evenodd"
            d="M14 0A14 14 0 0 1 28 14C28 22 20 28 14 36C8 28 0 22 0 14A14 14 0 0 1 14 0ZM14 8A6 6 0 1 0 14 20A6 6 0 1 0 14 8Z"
          />
        </svg>
        <span className="mr-2.5 flex flex-col items-center pt-1">
          <span className="text-[20px] leading-[22px] font-bold">4G+</span>
          <svg width="28" height="18" viewBox="0 0 28 18" fill="none" stroke="#707176" strokeWidth="4" aria-hidden="true">
            <path d="M8 1V14M2 9L8 15L14 9M20 17V4M14 9L20 3L26 9" />
          </svg>
        </span>
        <svg className="mr-3.5" width="34" height="36" viewBox="0 0 34 36" strokeWidth="4" strokeLinecap="round" aria-hidden="true">
          <path d="M3 30V34M12 21V34" stroke="currentColor" />
          <path d="M21 12V34M30 4V34" stroke="#707176" />
        </svg>
        <span className="mr-2 pt-1 text-[44px] leading-[52px]">76%</span>
        <svg width="26" height="36" viewBox="0 0 26 36" aria-hidden="true">
          <path d="M7 0H18V5H23Q25 5 25 7V14H1V7Q1 5 3 5H7Z" fill="#707176" />
          <path d="M1 13H25V34Q25 36 23 36H3Q1 36 1 34Z" fill="currentColor" />
        </svg>
      </div>
    </div>
  );
}

export default function App() {
  return (
    <div className="flex h-screen flex-col overflow-hidden bg-white font-['Roboto',sans-serif] text-[#2a2b30]">
      <StatusBar />

      <header className="z-10 flex h-[168px] shrink-0 items-center gap-24 bg-white pl-12 shadow-[0_2px_10px_rgba(0,0,0,0.3)]">
        <button type="button" aria-label="Back">
          <MdArrowBack size={72} />
        </button>
        <h1 className="pt-1 text-[59px] leading-[70px] font-medium">Directions</h1>
      </header>

      <main className="flex min-h-0 flex-1 flex-col overflow-hidden">
        <div className="relative h-[814px] shrink-0">
          <CityMap />
          <button
            type="button"
            aria-label="My location"
            className="absolute top-[54px] left-[54px] flex size-[114px] items-center justify-center rounded-full bg-white text-[#55575c] shadow-[0_3px_9px_rgba(0,0,0,0.35)]"
          >
            <svg width="56" height="56" viewBox="0 0 56 56" fill="none" stroke="currentColor" strokeWidth="6" aria-hidden="true">
              <circle cx="28" cy="28" r="18" />
              <circle cx="28" cy="28" r="9" fill="currentColor" stroke="none" />
              <path d="M28 1V8M28 48V55M1 28H8M48 28H55" />
            </svg>
          </button>
        </div>

        <section className="h-[324px] shrink-0 px-[66px] pt-[56px]">
          <h2 className="text-[59px] leading-[69px] font-medium">Praça do Comércio, Praça do Comércio, Lisbon, Portugal</h2>
          <p className="mt-6 text-[46px] leading-[56px] text-[#7c7d81]">22 min • €2.00</p>
        </section>

        <div className="flex h-[138px] shrink-0 items-center justify-between border-y-[3px] border-[#bdc2c7] bg-[#2a2b30] px-[66px] text-[40px] leading-[48px] font-medium text-[#bdc2c7]">
          <button type="button" className="flex items-center gap-5">
            <svg width="18" height="28" viewBox="0 0 18 28" fill="none" stroke="currentColor" strokeWidth="5" aria-hidden="true">
              <path d="M15 2L4 14L15 26" />
            </svg>
            <span className="pt-1">Earlier</span>
          </button>
          <span className="pt-1 text-[46px] leading-[56px] font-bold whitespace-nowrap text-white">12:46 - 13:09</span>
          <button type="button" className="flex items-center gap-5">
            <span className="pt-1">Later</span>
            <svg width="18" height="28" viewBox="0 0 18 28" fill="none" stroke="currentColor" strokeWidth="5" aria-hidden="true">
              <path d="M3 2L14 14L3 26" />
            </svg>
          </button>
        </div>

        <section className="mx-[33px] mt-[33px] flex shrink-0 gap-[61px] rounded-xl border-[3px] border-[#bdc2c7] pt-12 pb-12 pl-[56px] text-[#55565b]">
          <MdLocationOn size={63} className="shrink-0" />
          <div>
            <p className="text-[42px] leading-[52px] font-medium">Start from</p>
            <h3 className="mt-4 text-[53px] leading-[64px] font-bold text-[#2a2b30]">Praça de Alvalade</h3>
            <p className="mt-4 text-[46px] leading-[56px]">Praça Alvalade, Lisbon, Portugal</p>
            <p className="mt-10 text-[43px] leading-[56px] text-[#7c7d81]">Leave at 12:46</p>
          </div>
        </section>
      </main>

      <footer className="relative z-10 flex h-[208px] shrink-0 justify-between bg-white pr-[94px] pl-[66px] text-[43px] leading-[50px] text-[#2b93ec]">
        <div className="pointer-events-none absolute inset-x-0 bottom-full h-6 bg-linear-to-t from-black/16 to-transparent" />
        <div className="flex items-start gap-[96px] pt-[33px]">
          <button type="button" className="flex flex-col items-center gap-[19px]">
            <MdShare size={72} className="text-[#2496f3]" />
            Share
          </button>
          <button type="button" className="flex flex-col items-center gap-[19px]">
            <svg width="72" height="72" viewBox="0 0 72 72" aria-hidden="true">
              <path
                fill="#2496f3"
                d="M36 4C54 4 68 17 68 33C68 50 52 62 33 61C25 67 18 70 8 69C15 67 17 61 16 55C8 50 4 43 4 33C4 17 18 4 36 4Z"
              />
              <path d="M33 16H39V40H33Z" fill="#fff" />
              <circle cx="36" cy="47" r="3" fill="#fff" />
            </svg>
            Report
          </button>
        </div>
        <button type="button" className="relative -mt-[67px] flex flex-col items-center gap-[23px] self-start text-[#13b968]">
          <span className="flex size-[168px] items-center justify-center rounded-full bg-[#0dba67]">
            <svg width="60" height="66" viewBox="0 0 60 66" aria-hidden="true">
              <path
                fill="#fff"
                d="M3 7Q3 1 8 1Q10 1 12 2L57 28Q60 30 60 33Q60 36 57 38L12 64Q10 65 8 65Q3 65 3 59Z"
              />
            </svg>
          </span>
          Navigate
        </button>
      </footer>

      <nav className="grid h-[144px] shrink-0 grid-cols-3 items-center bg-[#f1f1f1] pt-2 pr-[90px] pl-[82px] text-[#8c8c8c]">
        <button type="button" aria-label="Back" className="justify-self-center">
          <svg width="28" height="48" viewBox="0 0 28 48" fill="none" stroke="currentColor" strokeWidth="6" strokeLinecap="round" aria-hidden="true">
            <path d="M24 5L5 24L24 43" />
          </svg>
        </button>
        <button type="button" aria-label="Home" className="justify-self-center">
          <svg width="48" height="48" viewBox="0 0 48 48" fill="none" stroke="currentColor" strokeWidth="6" aria-hidden="true">
            <rect x="3" y="3" width="42" height="42" rx="13" />
          </svg>
        </button>
        <button type="button" aria-label="Recent apps" className="justify-self-center">
          <svg width="44" height="48" viewBox="0 0 44 48" fill="none" stroke="currentColor" strokeWidth="6" strokeLinecap="round" aria-hidden="true">
            <path d="M4 5V43M22 5V43M40 5V43" />
          </svg>
        </button>
      </nav>
    </div>
  );
}
